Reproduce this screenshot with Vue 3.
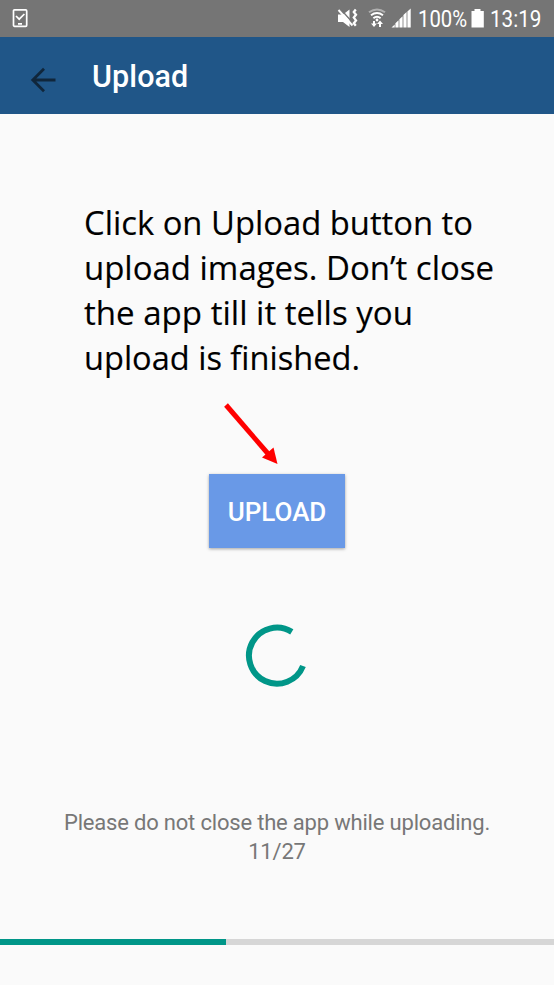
<script setup>
const instructions = [
  { text: 'Click on Upload button to', x: 84, y: 40, width: 389 },
  { text: 'upload images. Don’t close', x: 84, y: 85, width: 410 },
  { text: 'the app till it tells you', x: 84, y: 130, width: 329 },
  { text: 'upload is finished.', x: 84, y: 175, width: 276 },
]
const uploaded = 11
const total = 27
const progress = (uploaded / total) * 100
</script>

<template>
  <main class="screen">
    <header class="status">
      <svg class="status-icon" width="16" height="20" viewBox="0 0 16 20">
        <rect x="1.500" y="0.900" width="13.200" height="16.400" rx="1" fill="none" stroke="#fff" stroke-width="1.700" />
        <path d="M4 7l3.200 3.200 5.200-5.200M6 14.800h4" fill="none" stroke="#fff" stroke-width="1.700" />
      </svg>
      <svg class="status-info" width="224" height="37" viewBox="330 0 224 37">
        <path d="M338 14.500h5l6.500-5V27l-6.500-5H338z" fill="#fff" />
        <path d="M340.500 9l12 13.500" stroke="#757575" stroke-width="1.300" />
        <path d="M338.500 10l14 15.500" stroke="#fff" stroke-width="1.900" />
        <path d="M355.800 9.500l-2 2.500 2.200 2.800-2.200 2.800 2.200 2.800-2.200 2.800 2 2.600" fill="none" stroke="#fff" stroke-width="2.300" />
        <g fill="none" stroke="#fff" stroke-width="2">
          <path d="M369 12.300q8-5.800 16 0" stroke="#b0b0b0" />
          <path d="M371 15.200q6-4.500 12 0M373.400 18.200q3.600-3 7.200 0" />
        </g>
        <circle cx="377" cy="20" r="1.400" fill="#fff" />
        <path d="M374 27l-3-3.500h2V21h2v2.500h2zM380 20.500l3 3.500h-2v3h-2v-3h-2z" fill="#fff" />
        <path d="M391.500 27.500l3.200-3v3zM395.400 27.500v-4.300l3.200-3v7.300zM399.400 27.500v-8.300l3.200-3v11.300zM403.400 27.500V15l3.200-3v15.500zM407.400 27.500V11.500l3.300-3v19z" fill="#fff" />
        <text x="418" y="27" textLength="49" lengthAdjust="spacingAndGlyphs">100%</text>
        <path d="M471.500 11h3V9h6v2h3.300v16.500h-12.300z" fill="#fff" />
        <text x="490" y="27" textLength="51.500" lengthAdjust="spacingAndGlyphs">13:19</text>
      </svg>
    </header>

    <nav class="toolbar">
      <svg class="back" width="26" height="26" viewBox="0 0 26 26">
        <path d="M14 1.800L2.800 13 14 24.200M3 13h22.500" fill="none" stroke="#10263b" stroke-width="2.800" />
      </svg>
      <h1>Upload</h1>
    </nav>

    <svg class="note" width="554" height="200" viewBox="0 0 554 200">
      <text
        v-for="line in instructions"
        :key="line.y"
        :x="line.x"
        :y="line.y"
        :textLength="line.width"
        lengthAdjust="spacingAndGlyphs"
      >{{ line.text }}</text>
    </svg>

    <svg class="arrow" width="554" height="66" viewBox="0 400 554 66">
      <path d="M226 405L270 456" stroke="#f00" stroke-width="5" />
      <path d="M277.500 464L262 457.500 273.500 447.500z" fill="#f00" />
    </svg>

    <button class="upload" type="button">UPLOAD</button>

    <svg class="spinner" width="64" height="64" viewBox="245 624 64 64">
      <path d="M291.800 631.900A28 28 0 1 0 303 666" fill="none" stroke="#009688" stroke-width="6" />
    </svg>

    <p class="message">Please do not close the app while uploading.<br />{{ uploaded }}/{{ total }}</p>

    <div class="track"><div class="fill" :style="{ width: progress + '%' }"></div></div>
  </main>
</template>

<style>
body {
  margin: 0;
  background: #fafafa;
}
</style>

<style scoped>
.screen {
  display: flex;
  flex-direction: column;
  align-items: center;
  width: 554px;
  height: 985px;
  overflow: hidden;
  background: #fafafa;
  font-family: Roboto, sans-serif;
}
svg {
  display: block;
  flex: none;
}
.status {
  display: flex;
  flex: none;
  justify-content: space-between;
  width: 100%;
  height: 37px;
  background: #757575;
}
.status-icon {
  margin: 9px 0 0 12px;
}
.status-info text {
  font-size: 23px;
  fill: #fff;
}
.toolbar {
  display: flex;
  flex: none;
  align-items: center;
  box-sizing: border-box;
  width: 100%;
  height: 77px;
  padding-left: 30px;
  background: #205688;
}
.back {
  margin-top: 9px;
}
h1 {
  margin: 3px 0 0 36px;
  color: #fff;
  font-size: 30.500px;
  font-weight: 500;
  letter-spacing: 0.1px;
  line-height: 36px;
}
.note {
  margin-top: 81px;
}
.note text {
  font-family: "Open Sans", sans-serif;
  font-size: 33px;
  fill: #000;
  stroke: #000;
  stroke-width: 0.15px;
}
.arrow {
  margin-top: 5px;
}
.upload {
  flex: none;
  width: 136px;
  height: 74px;
  margin: 8px 0 0;
  padding: 2px 0 0;
  border: 0;
  background: #6999e7;
  box-shadow: 0 1px 3px rgba(0, 0, 0, 0.35);
  color: #fff;
  font-family: Roboto, sans-serif;
  font-size: 26px;
  font-weight: 500;
}
.spinner {
  margin-top: 76px;
}
.message {
  margin: 120px 0 0;
  color: #777;
  font-size: 22px;
  letter-spacing: -0.19px;
  line-height: 29px;
  text-align: center;
}
.track {
  flex: none;
  width: 100%;
  height: 6px;
  margin-top: 73px;
  background: #d6d6d6;
}
.fill {
  height: 100%;
  background: #009688;
}
</style>
